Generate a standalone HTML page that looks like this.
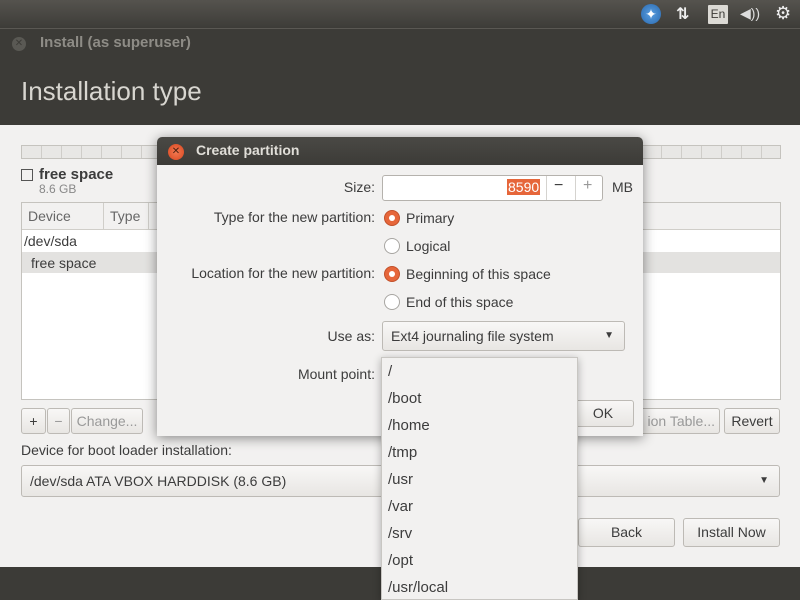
<!DOCTYPE html>
<html><head><style>
*{margin:0;padding:0;box-sizing:border-box}
html,body{width:800px;height:600px;overflow:hidden}
body{background:#f2f1f0;font-family:"Liberation Sans","DejaVu Sans",sans-serif;font-size:14px;color:#3c3c3c;position:relative}
.a{position:absolute;white-space:nowrap}
.r{position:absolute;white-space:nowrap;text-align:right;right:425px}
.btn{position:absolute;border:1px solid #bdbab5;border-radius:3px;background:linear-gradient(#f8f7f6,#e8e6e3);text-align:center;font-size:14px;color:#3c3c3c}
.radio{position:absolute;width:16px;height:16px;border-radius:50%;border:1px solid #a8a6a2;background:#fff}
.radio.on{background:#e6663a;border-color:#c2502a}
.radio.on::after{content:"";position:absolute;left:4px;top:4px;width:6px;height:6px;border-radius:50%;background:#fff}
</style></head><body>
<div class="a" style="left:0;top:0;width:800px;height:28px;background:linear-gradient(#55534e,#3d3c38)"></div>
<div class="a" style="left:641px;top:4px;width:20px;height:20px;border-radius:50%;background:radial-gradient(#5a9ee0,#2a6ab0);color:#fff;font-size:14px;text-align:center;line-height:20px">✦</div>
<div class="a" style="left:676px;top:4px;color:#eee;font-size:16px;font-weight:bold">⇅</div>
<div class="a" style="left:708px;top:5px;width:20px;height:19px;background:#dcdad5;color:#3c3b37;font-size:12px;text-align:center;line-height:19px;border-radius:1px">En</div>
<div class="a" style="left:740px;top:5px;color:#ddd;font-size:14px">◀))</div>
<div class="a" style="left:775px;top:3px;color:#eee;font-size:18px">⚙</div>
<div class="a" style="left:0;top:28px;width:800px;height:97px;background:#3c3b37;border-top:1px solid #5a5853"></div>
<div class="a" style="left:12px;top:37px;width:14px;height:14px;border-radius:50%;background:#5a5954;color:#3c3b37;font-size:10px;text-align:center;line-height:14px">✕</div>
<div class="a" style="left:40px;top:34px;color:#8e8c86;font-size:15px;font-weight:bold">Install (as superuser)</div>
<div class="a" style="left:21px;top:76px;color:#d8d6d0;font-size:26px">Installation type</div>
<div class="a" style="left:21px;top:145px;width:760px;height:14px;border:1px solid #c5c3be;background:repeating-linear-gradient(90deg,#e8e7e5 0,#e8e7e5 19px,#cfcdc9 19px,#cfcdc9 20px)"></div>
<div class="a" style="left:21px;top:169px;width:12px;height:12px;border:1px solid #555"></div>
<div class="a" style="left:39px;top:166px;font-weight:bold;font-size:15px">free space</div>
<div class="a" style="left:39px;top:182px;font-size:12px;color:#888">8.6 GB</div>
<div class="a" style="left:21px;top:202px;width:760px;height:198px;border:1px solid #c5c3be;background:#fff"></div>
<div class="a" style="left:22px;top:203px;width:758px;height:27px;background:#f2f1f0;border-bottom:1px solid #d0cec9"></div>
<div class="a" style="left:103px;top:203px;width:1px;height:27px;background:#d0cec9"></div>
<div class="a" style="left:148px;top:203px;width:1px;height:27px;background:#d0cec9"></div>
<div class="a" style="left:28px;top:208px;color:#666">Device</div>
<div class="a" style="left:110px;top:208px;color:#666">Type</div>
<div class="a" style="left:24px;top:233px">/dev/sda</div>
<div class="a" style="left:22px;top:252px;width:758px;height:21px;background:#e3e2e0"></div>
<div class="a" style="left:31px;top:255px">free space</div>
<div class="btn" style="left:21px;top:408px;width:25px;height:26px;line-height:24px">+</div>
<div class="btn" style="left:47px;top:408px;width:23px;height:26px;line-height:24px;color:#999">−</div>
<div class="btn" style="left:71px;top:408px;width:72px;height:26px;line-height:24px;color:#999">Change...</div>
<div class="btn" style="left:630px;top:408px;width:90px;height:26px;line-height:24px;color:#999;text-align:right;padding-right:4px">ion Table...</div>
<div class="btn" style="left:724px;top:408px;width:56px;height:26px;line-height:24px">Revert</div>
<div class="a" style="left:21px;top:442px">Device for boot loader installation:</div>
<div class="btn" style="left:21px;top:465px;width:759px;height:32px;line-height:30px;text-align:left;padding-left:8px">/dev/sda ATA VBOX HARDDISK (8.6 GB)<span style="position:absolute;right:10px;font-size:10px">▼</span></div>
<div class="btn" style="left:578px;top:518px;width:97px;height:29px;line-height:27px">Back</div>
<div class="btn" style="left:683px;top:518px;width:97px;height:29px;line-height:27px">Install Now</div>
<div class="a" style="left:0;top:567px;width:800px;height:33px;background:#3c3b37"></div>
<div class="a" style="left:157px;top:137px;width:486px;height:299px;background:#f2f1f0;box-shadow:0 2px 12px rgba(0,0,0,.45);border-radius:5px 5px 0 0"></div>
<div class="a" style="left:157px;top:137px;width:486px;height:28px;background:linear-gradient(#4a4945,#3c3b37);border-radius:5px 5px 0 0"></div>
<div class="a" style="left:168px;top:144px;width:16px;height:16px;border-radius:50%;background:radial-gradient(#f27a52,#d9461f);color:#4a2010;font-size:10px;text-align:center;line-height:16px">✕</div>
<div class="a" style="left:196px;top:142px;color:#e0ded8;font-weight:bold;font-size:14px">Create partition</div>
<div class="r" style="top:179px">Size:</div>
<div class="a" style="left:382px;top:175px;width:221px;height:26px;border:1px solid #b5b2ad;border-radius:3px;background:#fff"></div>
<div class="a" style="left:546px;top:176px;width:1px;height:24px;background:#d5d3cf"></div>
<div class="a" style="left:575px;top:176px;width:1px;height:24px;background:#d5d3cf"></div>
<div class="a" style="left:507px;top:179px;background:#e6663a;color:#fff;padding:0 1px">8590</div>
<div class="a" style="left:554px;top:177px;font-size:16px">−</div>
<div class="a" style="left:583px;top:177px;font-size:16px;color:#999">+</div>
<div class="a" style="left:612px;top:179px">MB</div>
<div class="r" style="top:209px">Type for the new partition:</div>
<div class="radio on" style="left:384px;top:210px"></div><div class="a" style="left:406px;top:210px">Primary</div>
<div class="radio" style="left:384px;top:238px"></div><div class="a" style="left:406px;top:238px">Logical</div>
<div class="r" style="top:265px">Location for the new partition:</div>
<div class="radio on" style="left:384px;top:266px"></div><div class="a" style="left:406px;top:266px">Beginning of this space</div>
<div class="radio" style="left:384px;top:294px"></div><div class="a" style="left:406px;top:294px">End of this space</div>
<div class="r" style="top:328px">Use as:</div>
<div class="btn" style="left:382px;top:321px;width:243px;height:30px;line-height:28px;text-align:left;padding-left:8px">Ext4 journaling file system<span style="position:absolute;right:10px;font-size:10px">▼</span></div>
<div class="r" style="top:366px">Mount point:</div>
<div class="btn" style="left:560px;top:400px;width:74px;height:27px;line-height:25px;padding-left:12px">OK</div>
<div class="a" style="left:381px;top:357px;width:197px;height:243px;background:#f2f1f0;border:1px solid #c8c6c2;box-shadow:0 2px 8px rgba(0,0,0,.3)"></div>
<div class="a" style="left:388px;top:358px;line-height:27px;font-size:15px">/<br>/boot<br>/home<br>/tmp<br>/usr<br>/var<br>/srv<br>/opt<br>/usr/local</div>
</body></html>
